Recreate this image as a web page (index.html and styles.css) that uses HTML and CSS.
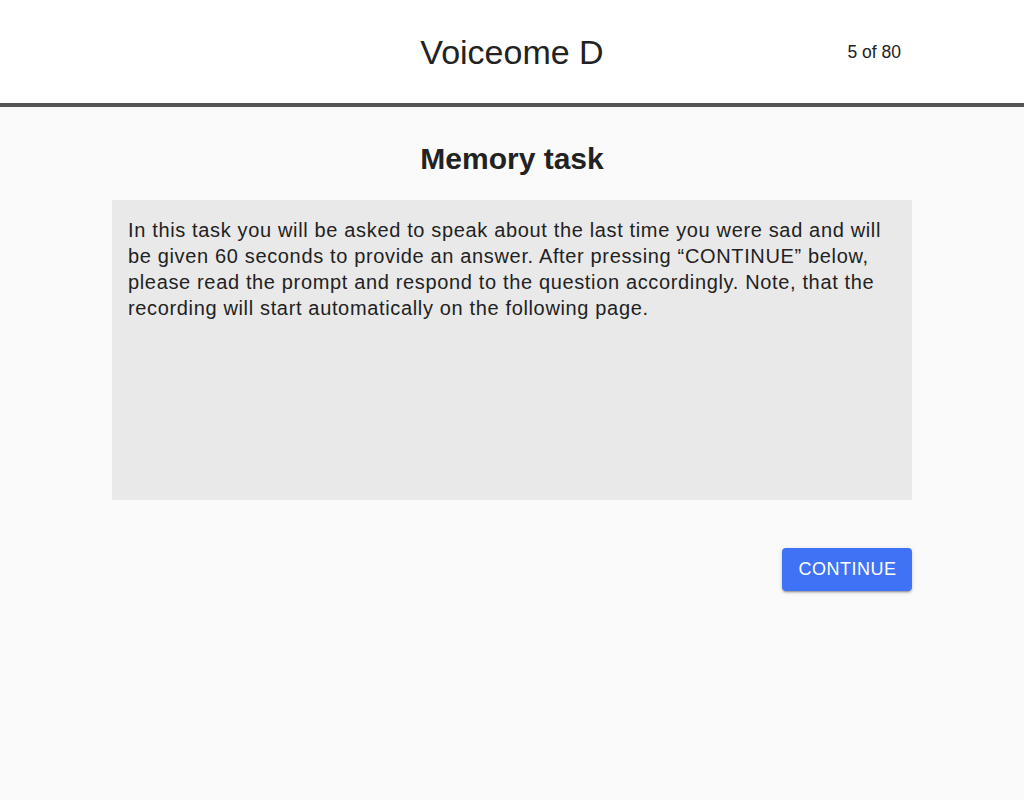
FILE: index.html
```html
<!DOCTYPE html>
<html lang="en">
<head>
<meta charset="utf-8">
<title>Voiceome D</title>
<link rel="stylesheet" href="styles.css">
</head>
<body>
<header class="topbar">
  <div class="topbar-inner">
    <div class="spacer"></div>
    <h1 class="title">Voiceome D</h1>
    <div class="counter">5 of 80</div>
  </div>
</header>
<main class="content">
  <h2 class="heading">Memory task</h2>
  <div class="panel">
    <p class="instructions">In this task you will be asked to speak about the last time you were sad and will be given 60 seconds to provide an answer. After pressing “CONTINUE” below, please read the prompt and respond to the question accordingly. Note, that the recording will start automatically on the following page.</p>
  </div>
  <div class="actions">
    <button class="btn" type="button">CONTINUE</button>
  </div>
</main>
</body>
</html>
```
FILE: styles.css
```css
* { box-sizing: border-box; }
html, body {
  margin: 0;
  padding: 0;
}
body {
  background: #fafafa;
  font-family: "Liberation Sans", Arial, Helvetica, sans-serif;
  color: #222222;
  min-height: 800px;
}
.topbar {
  background: #ffffff;
  height: 107px;
  border-bottom: 4px solid #555555;
}
.topbar-inner {
  width: 800px;
  margin: 0 auto;
  height: 103px;
  display: grid;
  grid-template-columns: 1fr auto 1fr;
  align-items: center;
}
.title {
  margin: 0;
  font-size: 34px;
  font-weight: 400;
  line-height: 40px;
  color: #222222;
}
.counter {
  justify-self: end;
  padding-right: 11px;
  font-size: 17.5px;
  line-height: 20px;
  color: #222222;
}
.content {
  width: 800px;
  margin: 0 auto;
  padding-top: 34px;
  display: flex;
  flex-direction: column;
}
.heading {
  margin: 0 0 23px;
  text-align: center;
  font-size: 30px;
  line-height: 34px;
  padding-top: 1px;
  padding-bottom: 1px;
  font-weight: 700;
  color: #222222;
}
.panel {
  background: #e9e9e9;
  height: 300px;
  padding: 17px 16px;
}
.instructions {
  margin: 0;
  font-size: 20px;
  line-height: 26px;
  letter-spacing: 0.65px;
  color: #222222;
}
.actions {
  display: flex;
  justify-content: flex-end;
  margin-top: 48px;
}
.btn {
  background: #3f72f5;
  color: #ffffff;
  border: none;
  border-radius: 4px;
  width: 130px;
  height: 43px;
  font-family: "Liberation Sans", Arial, Helvetica, sans-serif;
  font-size: 18px;
  letter-spacing: 0.5px;
  box-shadow: 0 3px 1px -2px rgba(0,0,0,0.2), 0 2px 2px 0 rgba(0,0,0,0.14), 0 1px 5px 0 rgba(0,0,0,0.12);
  cursor: pointer;
  padding: 0 0 0 1px;
}
```
